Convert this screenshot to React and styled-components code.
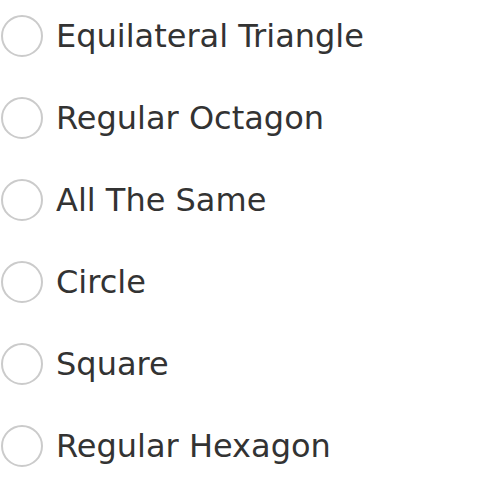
import React from "react";
import styled, { createGlobalStyle } from "styled-components";

const GlobalStyle = createGlobalStyle`
  html, body {
    margin: 0;
    padding: 0;
    background: #ffffff;
  }
`;

const OptionList = styled.div`
  display: flex;
  flex-direction: column;
  gap: 40px;
  padding: 15px 0 0 1px;
  font-family: "DejaVu Sans", Verdana, sans-serif;
`;

const Option = styled.label`
  display: flex;
  align-items: center;
  gap: 13px;
  height: 42px;
  cursor: pointer;
`;

const Radio = styled.span`
  box-sizing: border-box;
  width: 42px;
  height: 42px;
  border-radius: 50%;
  border: 2px solid #cbcbcb;
  background: #fff;
  flex-shrink: 0;
`;

const OptionText = styled.span`
  font-size: 32px;
  color: #333333;
  line-height: 1;
`;

const options = [
  "Equilateral Triangle",
  "Regular Octagon",
  "All The Same",
  "Circle",
  "Square",
  "Regular Hexagon",
];

export default function App() {
  return (
    <>
      <GlobalStyle />
      <OptionList>
        {options.map((text) => (
          <Option key={text}>
            <Radio />
            <OptionText>{text}</OptionText>
          </Option>
        ))}
      </OptionList>
    </>
  );
}
